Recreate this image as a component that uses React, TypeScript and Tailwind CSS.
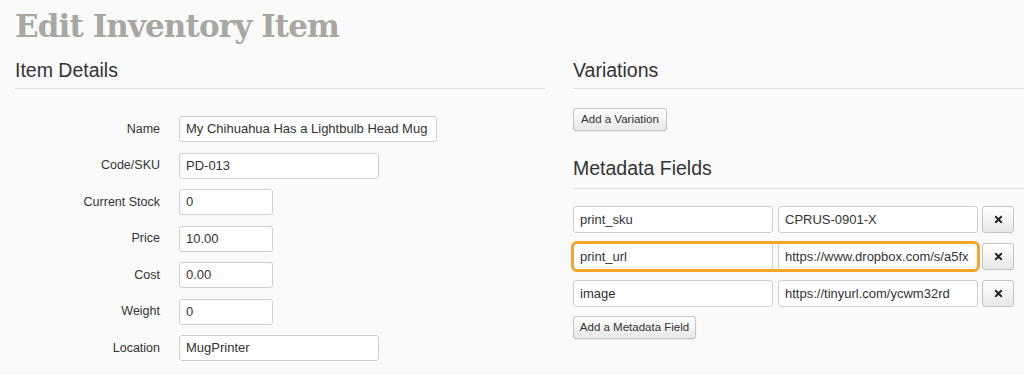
import React from "react";
import { FaTimes } from "react-icons/fa";

const sans = { fontFamily: '"Liberation Sans", Arial, sans-serif' };

function Field({ label, value, w }: { label: string; value: string; w: string }) {
  return (
    <div className="flex items-center h-[26px]">
      <div className="w-[145px] text-right text-[12.5px] text-[#333]">{label}</div>
      <div className={`ml-[19px] h-[26px] ${w} bg-white border border-[#cfcfcf] rounded-[3px] flex items-center px-[6px] text-[13px] text-[#333] overflow-hidden whitespace-nowrap`}>
        {value}
      </div>
    </div>
  );
}

function Btn({ children, w }: { children: React.ReactNode; w: string }) {
  return (
    <div className={`h-[23px] ${w} flex items-center justify-center rounded-[3px] border border-[#c4c4c4] bg-gradient-to-b from-white to-[#e8e8e8] text-[11.5px] text-[#333] shadow-[0_1px_1px_rgba(0,0,0,0.08)]`}>
      {children}
    </div>
  );
}

function Input({ value }: { value: string }) {
  return (
    <div className="h-[27px] w-[200px] bg-white border border-[#cfcfcf] rounded-[3px] flex items-center px-[6px] text-[13px] text-[#333] overflow-hidden whitespace-nowrap">
      {value}
    </div>
  );
}

function XBtn() {
  return (
    <div className="h-[27px] w-[32px] flex items-center justify-center rounded-[3px] border border-[#c4c4c4] bg-gradient-to-b from-white to-[#e8e8e8] text-[#222]">
      <FaTimes size={11} />
    </div>
  );
}

export default function App() {
  return (
    <div className="w-[1024px] h-[375px] bg-[#fafafa] overflow-hidden" style={sans}>
      <div className="pl-[15px] pt-[6px]">
        <h1
          className="text-[31px] leading-[40px] font-bold text-[#a8a7a2] tracking-[-0.9px]"
          style={{ fontFamily: '"DejaVu Serif", serif' }}
        >
          Edit Inventory Item
        </h1>
        <div className="flex gap-[28px] mt-[12px]">
          <div className="w-[530px]">
            <div className="text-[19.5px] leading-[24px] text-[#333] pb-[6px] border-b border-[#e1e1e1]">Item Details</div>
            <div className="flex flex-col gap-[10.5px] mt-[27px]">
              <Field label="Name" value="My Chihuahua Has a Lightbulb Head Mug" w="w-[258px]" />
              <Field label="Code/SKU" value="PD-013" w="w-[200px]" />
              <Field label="Current Stock" value="0" w="w-[94px]" />
              <Field label="Price" value="10.00" w="w-[94px]" />
              <Field label="Cost" value="0.00" w="w-[94px]" />
              <Field label="Weight" value="0" w="w-[94px]" />
              <Field label="Location" value="MugPrinter" w="w-[200px]" />
            </div>
          </div>
          <div className="flex-1">
            <div className="text-[19.5px] leading-[24px] text-[#333] pb-[6px] border-b border-[#e1e1e1]">Variations</div>
            <div className="mt-[19px]">
              <Btn w="w-[94px]">Add a Variation</Btn>
            </div>
            <div className="text-[19.5px] leading-[24px] text-[#333] pb-[8px] border-b border-[#e1e1e1] mt-[25px]">Metadata Fields</div>
            <div className="flex flex-col gap-[10px] mt-[17px]">
              <div className="flex items-center">
                <Input value="print_sku" />
                <div className="ml-[5px]"><Input value="CPRUS-0901-X" /></div>
                <div className="ml-[4px]"><XBtn /></div>
              </div>
              <div className="flex items-center">
                <div className="flex gap-[5px] rounded-[4px] outline-[3px] outline-solid outline-[#f5a42a] -outline-offset-1">
                  <Input value="print_url" />
                  <Input value="https://www.dropbox.com/s/a5fx" />
                </div>
                <div className="ml-[4px]"><XBtn /></div>
              </div>
              <div className="flex items-center">
                <Input value="image" />
                <div className="ml-[5px]"><Input value="https://tinyurl.com/ycwm32rd" /></div>
                <div className="ml-[4px]"><XBtn /></div>
              </div>
            </div>
            <div className="mt-[9px]">
              <Btn w="w-[123px]">Add a Metadata Field</Btn>
            </div>
          </div>
        </div>
      </div>
    </div>
  );
}
